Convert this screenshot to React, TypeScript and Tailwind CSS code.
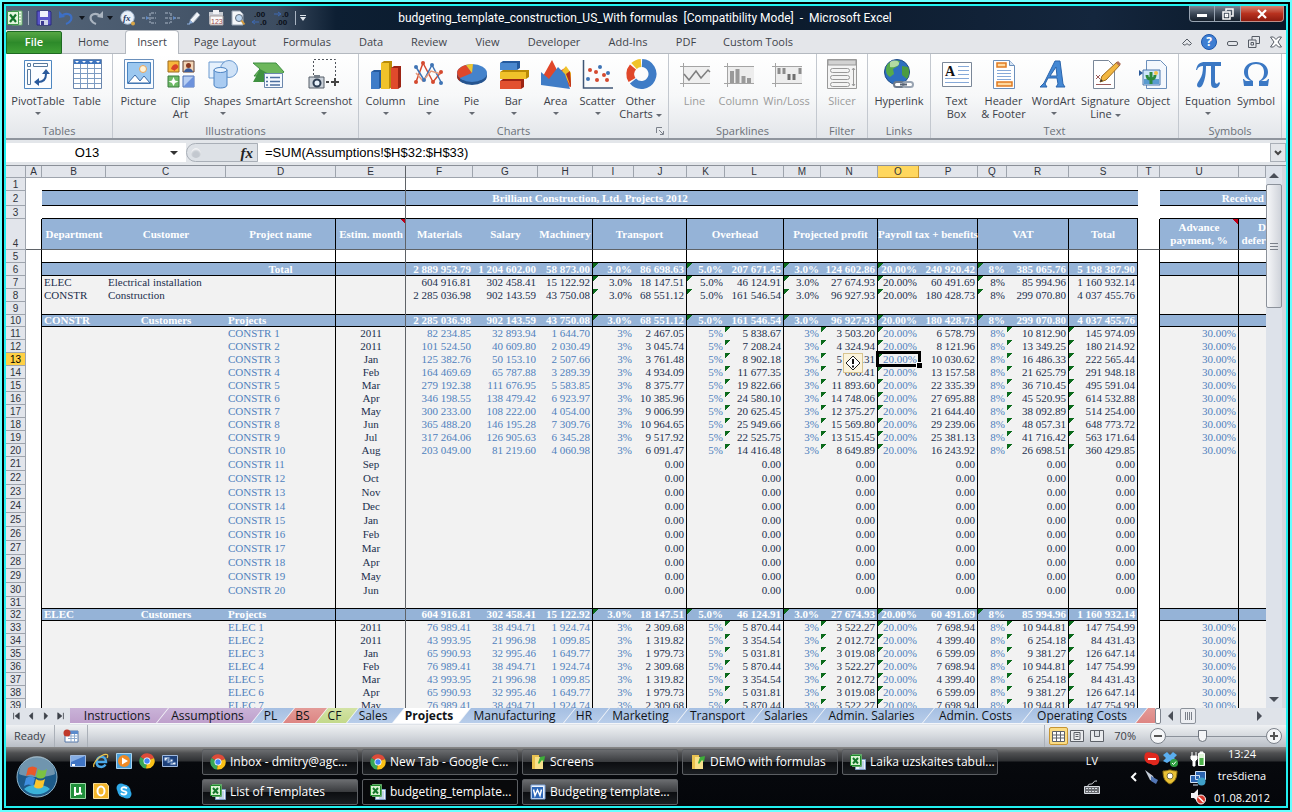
import clsx from "clsx";
import type { ReactNode } from "react";

/* ---------- Sheet data ---------- */

const COLUMNS = [
  { id: "A", width: "w-4" },
  { id: "B", width: "w-16" },
  { id: "C", width: "w-[120px]" },
  { id: "D", width: "w-[110px]" },
  { id: "E", width: "w-[70px]" },
  { id: "F", width: "w-[67px]" },
  { id: "G", width: "w-[65px]" },
  { id: "H", width: "w-[55px]" },
  { id: "I", width: "w-[41px]" },
  { id: "J", width: "w-[53px]" },
  { id: "K", width: "w-[38px]" },
  { id: "L", width: "w-[59px]" },
  { id: "M", width: "w-[37px]" },
  { id: "N", width: "w-[57px]" },
  { id: "O", width: "w-[41px]" },
  { id: "P", width: "w-[59px]" },
  { id: "Q", width: "w-[29px]" },
  { id: "R", width: "w-[62px]" },
  { id: "S", width: "w-[69px]" },
  { id: "T", width: "w-[22px]" },
  { id: "U", width: "w-[79px]" },
  { id: "V", width: "" },
];

const EDGES = "ADHJLNPRSTU";
const MONTHS = ["2011", "2011", "Jan", "Feb", "Mar", "Apr", "May", "Jun", "Jul", "Aug", "Sep", "Oct", "Nov", "Dec", "Jan", "Feb", "Mar", "Apr", "May", "Jun"];

// Order of amounts: F, G, H, J, L, N, P, R, S
const AMOUNT_COLUMNS = "FGHJLNPRS";

const TOTAL = "2 889 953.79|1 204 602.00|58 873.00|86 698.63|207 671.45|124 602.86|240 920.42|385 065.76|5 198 387.90";
const ELEC = "604 916.81|302 458.41|15 122.92|18 147.51|46 124.91|27 674.93|60 491.69|85 994.96|1 160 932.14";
const CONSTR = "2 285 036.98|902 143.59|43 750.08|68 551.12|161 546.54|96 927.93|180 428.73|299 070.80|4 037 455.76";

const CONSTR_PROJECTS = [
  "82 234.85|32 893.94|1 644.70|2 467.05|5 838.67|3 503.20|6 578.79|10 812.90|145 974.09",
  "101 524.50|40 609.80|2 030.49|3 045.74|7 208.24|4 324.94|8 121.96|13 349.25|180 214.92",
  "125 382.76|50 153.10|2 507.66|3 761.48|8 902.18|5 341.31|10 030.62|16 486.33|222 565.44",
  "164 469.69|65 787.88|3 289.39|4 934.09|11 677.35|7 006.41|13 157.58|21 625.79|291 948.18",
  "279 192.38|111 676.95|5 583.85|8 375.77|19 822.66|11 893.60|22 335.39|36 710.45|495 591.04",
  "346 198.55|138 479.42|6 923.97|10 385.96|24 580.10|14 748.06|27 695.88|45 520.95|614 532.88",
  "300 233.00|108 222.00|4 054.00|9 006.99|20 625.45|12 375.27|21 644.40|38 092.89|514 254.00",
  "365 488.20|146 195.28|7 309.76|10 964.65|25 949.66|15 569.80|29 239.06|48 057.31|648 773.72",
  "317 264.06|126 905.63|6 345.28|9 517.92|22 525.75|13 515.45|25 381.13|41 716.42|563 171.64",
  "203 049.00|81 219.60|4 060.98|6 091.47|14 416.48|8 649.89|16 243.92|26 698.51|360 429.85",
];

const ELEC_PROJECTS = [
  "76 989.41|38 494.71|1 924.74|2 309.68|5 870.44|3 522.27|7 698.94|10 944.81|147 754.99",
  "43 993.95|21 996.98|1 099.85|1 319.82|3 354.54|2 012.72|4 399.40|6 254.18|84 431.43",
  "65 990.93|32 995.46|1 649.77|1 979.73|5 031.81|3 019.08|6 599.09|9 381.27|126 647.14",
];

type Cells = Record<string, string>;
type Kind = "blue" | "summary" | "detail" | "white";

function amounts(line: string): Cells {
  const cells: Cells = {};
  line.split("|").forEach((value, i) => {
    cells[AMOUNT_COLUMNS[i]] = value;
  });
  return cells;
}

const RATES = { I: "3.0%", K: "5.0%", M: "3.0%", O: "20.00%", Q: "8%" };
const DETAIL_RATES = { I: "3%", K: "5%", M: "3%", O: "20.00%", Q: "8%", U: "30.00%" };
const ZEROS = { J: "0.00", L: "0.00", N: "0.00", P: "0.00", R: "0.00", S: "0.00" };

/* ---------- Sheet ---------- */

function RowHeader({ n, active, low }: { n: number; active?: boolean; low?: boolean }) {
  return (
    <th
      scope="row"
      className={clsx(
        "border-r border-b border-[#9ea4ad] p-0 text-center font-['Liberation_Sans',sans-serif] text-[10px] font-normal",
        active ? "bg-[#ffd044] text-black" : "bg-[#e2e5eb] text-[#30343c]",
        low && "align-bottom",
      )}
    >
      {n}
    </th>
  );
}

function align(id: string, kind: Kind, text?: string) {
  if (id === "E") return "text-center";
  if (kind === "blue" && (id === "C" || text === "Total")) return "text-center";
  return id < "E" ? "text-left" : "text-right";
}

type SheetRowProps = {
  n: number;
  kind: Kind;
  height?: string;
  cells?: Cells;
  line?: boolean;
};

function SheetRow({ n, kind, height = "h-[13px]", cells = {}, line }: SheetRowProps) {
  const selected = n === 13;
  const flags = kind === "detail" ? "LNORS" : "IKMOQ";

  return (
    <tr className={height}>
      <RowHeader n={n} active={selected} />
      {COLUMNS.map(({ id }) => {
        const text = cells[id];
        const gap = id === "A" || id === "T";
        const flagged = text && text !== "0.00" && kind !== "white" && flags.includes(id);
        const input = kind === "detail" && "DFGHIKMOQU".includes(id);
        return (
          <td
            key={id}
            className={clsx(
              "px-0.5",
              align(id, kind, text),
              EDGES.includes(id) && "border-r border-black",
              line && !gap && "border-b border-b-black",
              gap || kind === "white" ? "bg-white" : kind === "blue" ? "bg-[#95b3d7]" : "bg-[#f2f2f2]",
              flagged && "bg-[linear-gradient(135deg,#0b6b1c_4px,transparent_4px)]",
              kind === "blue" ? "font-bold text-white" : input ? "text-[#4f81bd]" : "text-[#1b2f4d]",
              selected && (id === "N" || id === "O") && "relative",
            )}
          >
            {text}
            {selected && id === "O" && (
              <span className="pointer-events-none absolute -inset-x-0.5 -top-0.5 -bottom-px border-3 border-black">
                <span className="absolute -right-1 -bottom-1 size-1.5 border-t border-l border-white bg-black" />
              </span>
            )}
            {selected && id === "N" && (
              <button
                type="button"
                aria-label="Error checking options"
                className="absolute top-0 left-[22px] z-10 flex size-5 items-center justify-center border border-[#d8c48e] bg-[#faf3dc]"
              >
                <svg viewBox="0 0 16 16" className="size-4">
                  <path d="M8 1 15 8 8 15 1 8Z" fill="#fff" stroke="#222" />
                  <path d="M8 4v5M8 10.5v2" stroke="#111" strokeWidth="2" />
                </svg>
              </button>
            )}
          </td>
        );
      })}
    </tr>
  );
}

function HeadCell({ children, span = 1, edge, note }: { children: ReactNode; span?: number; edge?: boolean; note?: boolean }) {
  return (
    <th
      scope="col"
      colSpan={span}
      className={clsx(
        "border-b border-b-[#5f6368] bg-[#95b3d7] p-0 text-center leading-[13px] font-bold text-white",
        edge && "border-r border-r-black",
        note && "bg-[linear-gradient(225deg,#c00018_4px,transparent_4px)]",
      )}
    >
      {children}
    </th>
  );
}

function Sheet() {
  return (
    <div className="relative min-w-0 flex-1 overflow-hidden bg-white">
      <table className="w-full table-fixed border-separate border-spacing-0 font-['Liberation_Serif',serif] text-[11px] leading-[11px] whitespace-nowrap">
        <colgroup>
          <col className="w-5" />
          {COLUMNS.map((c) => (
            <col key={c.id} className={c.width} />
          ))}
        </colgroup>
        <thead>
          <tr className="h-3 font-['Liberation_Sans',sans-serif] text-[10px] text-[#30343c]">
            <td className="border-r border-b border-[#9ea4ad] bg-[#e2e5eb] p-0" />
            {COLUMNS.map(({ id }) => (
              <th
                key={id}
                scope="col"
                className={clsx(
                  "border-r border-b p-0 font-normal",
                  id === "O" ? "border-[#c9962a] bg-[#ffd75e]" : "border-[#9ea4ad] bg-[#e2e5eb]",
                )}
              >
                {id === "V" ? "" : id}
              </th>
            ))}
          </tr>
        </thead>
        <tbody>
          <tr className="h-[13px]">
            <RowHeader n={1} />
            <td />
            <td colSpan={18} className="border-b border-black" />
            <td />
            <td colSpan={2} className="border-b border-black" />
          </tr>
          <tr className="h-[15px] font-bold text-white">
            <RowHeader n={2} />
            <td />
            <td colSpan={18} className="border-b border-black bg-[#95b3d7] p-0 text-center">
              Brilliant Construction, Ltd. Projects 2012
            </td>
            <td />
            <td colSpan={2} className="border-b border-black bg-[#95b3d7] px-0.5 py-0 text-right">
              Received
            </td>
          </tr>
          <tr className="h-[13px]">
            <RowHeader n={3} />
            <td />
            <td colSpan={18} className="border-b border-black" />
            <td />
            <td colSpan={2} className="border-b border-black" />
          </tr>
          <tr className="h-[31px]">
            <RowHeader n={4} low />
            <td className="border-r border-b border-black border-b-[#5f6368]" />
            <HeadCell>Department</HeadCell>
            <HeadCell>Customer</HeadCell>
            <HeadCell edge>Project name</HeadCell>
            <HeadCell note>Estim. month</HeadCell>
            <HeadCell>Materials</HeadCell>
            <HeadCell>Salary</HeadCell>
            <HeadCell edge>Machinery</HeadCell>
            <HeadCell span={2} edge>Transport</HeadCell>
            <HeadCell span={2} edge>Overhead</HeadCell>
            <HeadCell span={2} edge>Projected profit</HeadCell>
            <HeadCell span={2} edge>Payroll tax + benefits</HeadCell>
            <HeadCell span={2} edge>VAT</HeadCell>
            <HeadCell edge>Total</HeadCell>
            <td className="border-r border-b border-black border-b-[#5f6368]" />
            <HeadCell edge note>
              Advance
              <br />
              payment, %
            </HeadCell>
            <HeadCell>
              <span className="block text-right">
                D
                <br />
                defer
              </span>
            </HeadCell>
          </tr>
          <SheetRow n={5} kind="white" line />
          <SheetRow n={6} kind="blue" line cells={{ D: "Total", ...RATES, ...amounts(TOTAL) }} />
          <SheetRow n={7} kind="summary" cells={{ B: "ELEC", C: "Electrical installation", ...RATES, ...amounts(ELEC) }} />
          <SheetRow n={8} kind="summary" cells={{ B: "CONSTR", C: "Construction", ...RATES, ...amounts(CONSTR) }} />
          <SheetRow n={9} kind="summary" line />
          <SheetRow n={10} kind="blue" height="h-3" line cells={{ B: "CONSTR", C: "Customers", D: "Projects", ...RATES, ...amounts(CONSTR) }} />
          {MONTHS.map((month, i) => {
            const line = CONSTR_PROJECTS[i];
            const values = line ? { ...DETAIL_RATES, ...amounts(line) } : ZEROS;
            return (
              <SheetRow
                key={i}
                n={11 + i}
                kind="detail"
                height={line ? "h-[13px]" : "h-3.5"}
                cells={{ D: `CONSTR ${i + 1}`, E: month, ...values }}
              />
            );
          })}
          <SheetRow n={31} kind="detail" height="h-3" line />
          <SheetRow n={32} kind="blue" height="h-3" line cells={{ B: "ELEC", C: "Customers", D: "Projects", ...RATES, ...amounts(ELEC) }} />
          {MONTHS.slice(0, 7).map((month, i) => (
            <SheetRow
              key={i}
              n={33 + i}
              kind="detail"
              cells={{ D: `ELEC ${i + 1}`, E: month, ...DETAIL_RATES, ...amounts(ELEC_PROJECTS[i % 3]) }}
            />
          ))}
        </tbody>
      </table>
      {/* Frozen pane divider */}
      <div className="pointer-events-none absolute inset-y-0 left-[399px] w-px bg-[#5f6368]" />
    </div>
  );
}

function VerticalScroll() {
  return (
    <div className="flex w-5 shrink-0 flex-col border-r-4 border-[#d3d8df] bg-[#dde2ea]">
      <button type="button" aria-label="Scroll up" className="flex h-[18px] items-center justify-center">
        <span className="border-x-5 border-b-5 border-transparent border-b-[#4a4f58]" />
      </button>
      <div className="flex h-[124px] flex-col items-center justify-center gap-0.5 rounded-xs border border-[#8c929b] bg-linear-to-r from-[#f6f7f9] to-[#cfd3da]">
        <span className="h-px w-2 bg-[#7a808a]" />
        <span className="h-px w-2 bg-[#7a808a]" />
        <span className="h-px w-2 bg-[#7a808a]" />
      </div>
      <button type="button" aria-label="Scroll down" className="mt-auto flex h-[18px] items-center justify-center">
        <span className="border-x-5 border-t-5 border-transparent border-t-[#4a4f58]" />
      </button>
    </div>
  );
}

/* ---------- Title bar ---------- */

function ExcelLogo({ className }: { className?: string }) {
  return (
    <svg viewBox="0 0 16 16" className={className}>
      <path d="M5 1h10v14H5z" fill="#f4fff0" stroke="#5fa866" />
      <path d="M10 4h4M10 7h4M10 10h4M10 13h4" stroke="#7dbb7c" />
      <path d="M.5 1.5h11v13H.5z" fill="#e4f6de" stroke="#3f9a4a" />
      <path d="m3 4.5 6 7.5M9 4.5 3 12" stroke="#13752a" strokeWidth="2.2" />
    </svg>
  );
}

function ExcelDoc() {
  return (
    <svg viewBox="0 0 16 16" className="size-4 shrink-0">
      <path d="M5.5 5.5h10v10h-10z" fill="#eef4fb" stroke="#7f9cc4" />
      <path d="M9 8h5M9 10h5M9 12h5M9 14h5" stroke="#8fb0d8" />
      <path d="M2.5.5h9v12h-9z" fill="#fff" stroke="#5fa866" />
      <path d="M.5 1.5h10v10H.5z" fill="#d9f2d2" stroke="#1f8a2c" />
      <path d="m3 4 5 5.5M8 4 3 9.5" stroke="#13752a" strokeWidth="2" />
    </svg>
  );
}

function QuickAccess() {
  const item = "flex h-5 w-[22px] items-center justify-center";
  return (
    <div className="flex flex-1 items-center">
      <ExcelLogo className="mx-px size-4" />
      <span className="mx-1 h-3.5 w-px bg-[#a9b4c2]" />
      <button type="button" aria-label="Save" className={item}>
        <svg viewBox="0 0 16 16" className="size-4">
          <path d="M1 1h13l1 1v13H1z" fill="#5a55c8" stroke="#2b2a80" />
          <path d="M4 1h8v6H4z" fill="#eef1fb" />
          <path d="M4 10h8v5H4z" fill="#cfd5ea" />
          <path d="M5 11h3v4H5z" fill="#3b3a90" />
        </svg>
      </button>
      <button type="button" aria-label="Undo" className={item}>
        <svg viewBox="0 0 16 16" className="size-4" fill="none" stroke="#3d6fc4" strokeWidth="2.2">
          <path d="M4 6c4-4 11-2 9 4-1 2-2 3-5 4" />
          <path d="M1 8V1l6 6z" fill="#3d6fc4" stroke="none" />
        </svg>
      </button>
      <span className="ml-0.5 border-x-3 border-t-4 border-transparent border-t-[#10151d]" />
      <button type="button" aria-label="Redo" className={item}>
        <svg viewBox="0 0 16 16" className="size-4" fill="none" stroke="#aab4c0" strokeWidth="2.2">
          <path d="M12 6C8 2 1 4 3 10c1 2 2 3 5 4" />
          <path d="M15 8V1L9 7z" fill="#aab4c0" stroke="none" />
        </svg>
      </button>
      <span className="border-x-3 border-t-4 border-transparent border-t-[#10151d]" />
      <button type="button" aria-label="Insert function" className={clsx(item, "ml-1")}>
        <svg viewBox="0 0 16 16" className="size-4">
          <circle cx="7.5" cy="7.5" r="6.7" fill="#e9f0f8" stroke="#a8bdd6" />
          <text x="3" y="11" fontSize="9" fontStyle="italic" fontWeight="700" fontFamily="Liberation Serif, serif" fill="#1e3864">fx</text>
          <circle cx="13" cy="13.5" r="2" fill="#d9a648" />
        </svg>
      </button>
      <button type="button" aria-label="Trace precedents" className={item}>
        <svg viewBox="0 0 16 16" className="size-4" stroke="#a9b6c6" fill="none">
          <path d="M0 8h7M9 3h5M9 8h5M9 13h5M8 3v10" strokeDasharray="3 1" />
          <path d="M4 6v4l3-2z" fill="#5f89c4" stroke="none" />
        </svg>
      </button>
      <button type="button" aria-label="Trace dependents" className={item}>
        <svg viewBox="0 0 16 16" className="size-4" stroke="#a9b6c6" fill="none">
          <path d="M9 8h7M1 3h5M1 8h5M1 13h5M7 3v10" strokeDasharray="3 1" />
          <path d="M9 6v4l3-2z" fill="#5f89c4" stroke="none" />
        </svg>
      </button>
      <button type="button" aria-label="Remove arrows" className={item}>
        <svg viewBox="0 0 16 16" className="size-4">
          <path d="m4 10 7-8 3 3-7 8z" fill="#f1f4f8" stroke="#97a3b2" />
          <path d="m4 10 3 3-4 1z" fill="#8fb0de" />
          <path d="M1 14h3" stroke="#8fb0de" />
        </svg>
      </button>
      <button type="button" aria-label="Paste values" className={item}>
        <svg viewBox="0 0 16 16" className="size-4">
          <path d="M1 2h14v12H1z" fill="#c8ccd3" />
          <path d="M5 0h6v4H5z" fill="#f2f3f5" />
          <path d="M2 6h13v9H2z" fill="#fafafa" stroke="#a59c9c" />
          <text x="3" y="14" fontSize="7" fontFamily="Liberation Sans, sans-serif" fill="#9c4b4b">123</text>
        </svg>
      </button>
      <button type="button" aria-label="Print preview" className={item}>
        <svg viewBox="0 0 16 16" className="size-4">
          <path d="M2 1h8l3 3v11H2z" fill="#f5f7fa" stroke="#9aa6b5" />
          <circle cx="9" cy="8" r="3.5" fill="#bcd6f0" stroke="#5e6b7c" />
          <path d="m11.5 10.5 3 4" stroke="#d39a3c" strokeWidth="2" />
        </svg>
      </button>
      {["Increase decimal", "Decrease decimal"].map((label, i) => (
        <button key={label} type="button" aria-label={label} className={item}>
          <svg viewBox="0 0 16 16" className="size-4" fontFamily="Liberation Sans, sans-serif" fontSize="8" fontWeight="700" fill="#0a0f18">
            <text x={i ? 8 : 2} y="7">{i ? ".0" : ".00"}</text>
            <text x={i ? 2 : 8} y="15">{i ? ".00" : ".0"}</text>
            <path d={i ? "M0 4h6M4 2l3 2-3 2" : "M7 12H1m2-2-3 2 3 2"} stroke="#3e6ab4" fill="none" />
          </svg>
        </button>
      ))}
      <span className="mr-1 ml-0.5 h-3.5 w-px bg-[#a9b4c2]" />
      <button type="button" aria-label="Customize quick access" className="flex flex-col items-center gap-px">
        <span className="h-px w-1.5 bg-[#dfe5ec]" />
        <span className="border-x-3 border-t-4 border-transparent border-t-[#dfe5ec]" />
      </button>
    </div>
  );
}

function TitleBar() {
  return (
    <header className="flex h-6 shrink-0 bg-[linear-gradient(90deg,#55667a_0,#3d4d61_270px,#0d1f33_330px,#081626_50%,#14263d_85%,#0a1828_100%)]">
      <QuickAccess />
      <h1 className="self-center font-[Roboto,sans-serif] text-xs whitespace-pre text-white">
        budgeting_template_construction_US_With formulas  [Compatibility Mode]  -  Microsoft Excel
      </h1>
      <div className="flex flex-1 items-start justify-end pr-0.5">
        <button type="button" aria-label="Minimize" className="flex h-4 w-[26px] items-end justify-center rounded-bl-sm border border-t-0 border-[#98a4b2] bg-linear-to-b from-[#7d8895] via-[#3e4a59] to-[#16202c] pb-1">
          <span className="h-[3px] w-2.5 bg-white" />
        </button>
        <button type="button" aria-label="Restore" className="flex h-4 w-[26px] items-center justify-center border border-t-0 border-l-0 border-[#98a4b2] bg-linear-to-b from-[#7d8895] via-[#3e4a59] to-[#16202c]">
          <svg viewBox="0 0 12 12" className="size-3" fill="none" stroke="#fff" strokeWidth="1.5">
            <path d="M4 3V1h7v7H9M1 4h7v7H1zM3.5 6.5h2v2h-2z" />
          </svg>
        </button>
        <button type="button" aria-label="Close" className="flex h-4 w-[43px] items-center justify-center rounded-br-sm border border-t-0 border-l-0 border-[#c08e88] bg-linear-to-b from-[#d8826f] via-[#b8321f] to-[#8d1a0e]">
          <svg viewBox="0 0 10 10" className="size-2.5" stroke="#fff" strokeWidth="2.2">
            <path d="m1 1 8 8M9 1 1 9" />
          </svg>
        </button>
      </div>
    </header>
  );
}

/* ---------- Ribbon ---------- */

const TABS = [
  { label: "Home", width: "w-[63px]" },
  { label: "Insert", width: "w-[54px]" },
  { label: "Page Layout", width: "w-[92px]" },
  { label: "Formulas", width: "w-[72px]" },
  { label: "Data", width: "w-14" },
  { label: "Review", width: "w-[60px]" },
  { label: "View", width: "w-[57px]" },
  { label: "Developer", width: "w-[76px]" },
  { label: "Add-Ins", width: "w-[72px]" },
  { label: "PDF", width: "w-11" },
  { label: "Custom Tools", width: "w-[100px]" },
];

function RibbonTabs() {
  return (
    <nav className="flex h-6 shrink-0 items-stretch bg-[#e4e6ea] text-[11px] text-[#3f444b]">
      <button type="button" className="mt-px w-14 rounded-t-xs border border-[#1e6a22] bg-linear-to-b from-[#57a744] via-[#2d8a2a] to-[#3fa035] font-semibold text-white">
        File
      </button>
      {TABS.map(({ label, width }) => (
        <button
          key={label}
          type="button"
          className={clsx(
            width,
            label === "Insert" ? "rounded-t-sm border border-b-0 border-[#b4b9c0] bg-white" : "border-b border-[#b4b9c0] pt-px",
          )}
        >
          {label}
        </button>
      ))}
      <div className="flex flex-1 items-center justify-end gap-2 border-b border-[#b4b9c0] pr-1">
        <button type="button" aria-label="Collapse ribbon">
          <svg viewBox="0 0 12 12" className="size-3" fill="none" stroke="#555b64">
            <path d="M1.5 7.5 6 3l4.5 4.5L9 9H7.5L6 7.5 4.5 9H3z" />
          </svg>
        </button>
        <button type="button" aria-label="Help" className="flex size-4 items-center justify-center rounded-full border border-[#1c56ab] bg-[#3e7ed2] text-xs font-bold text-white">
          ?
        </button>
        <button type="button" aria-label="Minimize workbook" className="mt-1 ml-0.5 h-[5px] w-[11px] rounded-xs border border-[#555b64]" />
        <button type="button" aria-label="Restore workbook" className="ml-0.5">
          <svg viewBox="0 0 12 12" className="size-3" fill="none" stroke="#555b64">
            <path d="M4 4V.5h7.5v7H8M.5 4H8v7.5H.5zM3 6.5h2.5V9H3z" />
          </svg>
        </button>
        <button type="button" aria-label="Close workbook" className="ml-0.5">
          <svg viewBox="0 0 12 12" className="size-3" fill="#fff" stroke="#555b64">
            <path d="M.5 1h3L6 3.5 8.5 1h3L8 6l3.5 5h-3L6 8.5 3.5 11h-3L4 6z" />
          </svg>
        </button>
      </div>
    </nav>
  );
}

const svg = "size-8";

const ICONS: Record<string, ReactNode> = {
  pivot: (
    <svg viewBox="0 0 32 32" className={svg} fill="none">
      <path d="M2.5 2.5h27v28h-27z" fill="#fbfdff" stroke="#4e86c0" />
      <path d="M5.5 5.5h3v3h-3zM11.5 5.5h14v3h-14zM5.5 11.5h3v15h-3z" stroke="#56789c" />
      <path d="M16 24c6 0 8-3 8-8" stroke="#2a5a9c" strokeWidth="2" />
      <path d="m12 24 5-4v8zM24 11l4 5h-8z" fill="#2a5a9c" />
    </svg>
  ),
  table: (
    <svg viewBox="0 0 32 32" className={svg} fill="none">
      <path d="M2.5 1.5h28v29h-28z" fill="#fff" stroke="#6a86ad" />
      <path d="M3 2h27v4H3z" fill="#3e74bd" />
      <path d="M3 10.5h27M3 15.5h27M3 20.5h27M3 25.5h27M9.5 6v24M16.5 6v24M23.5 6v24" stroke="#7d9cc2" />
      <path d="m4 3 2 2 2-2zm7 0 2 2 2-2zm7 0 2 2 2-2zm7 0 2 2 2-2z" fill="#fff" />
    </svg>
  ),
  picture: (
    <svg viewBox="0 0 32 32" className={svg}>
      <path d="M1.5 1.5h29v29h-29z" fill="#f8fbff" stroke="#6a8fbb" />
      <path d="M4.5 4.5h23v21h-23z" fill="#9cc8f0" stroke="#4a84c0" />
      <circle cx="20" cy="11" r="3.5" fill="#fff3d8" stroke="#e8a55a" />
      <path d="m5 25 7-8 5 6 4-5 6 7z" fill="#fff" stroke="#3d6ca8" />
    </svg>
  ),
  clip: (
    <svg viewBox="0 0 32 32" className={svg}>
      <path d="M3 3h11v11H3z" fill="#f6b73c" stroke="#9b6a1c" />
      <path d="M6 11c1-5 6-6 7-3s-3 3-3 5z" fill="#d8432a" />
      <path d="M18 3h11v11H18z" fill="#f3d6b8" stroke="#5c3a2c" />
      <circle cx="23.5" cy="7.5" r="2.5" fill="#8a3a22" />
      <path d="M19 14c1-5 8-5 9 0z" fill="#3a5c9c" />
      <path d="M3 18h11v11H3z" fill="#6db966" stroke="#3c7d40" />
      <path d="m8.5 19 1.5 3.5 3.5 1L10 25l-1.5 3L7 25l-3.5-1.5 3.5-1z" fill="#fff" />
      <path d="M18 18h11v11H18z" fill="#b6cdf2" stroke="#4b6fb4" />
      <path d="m18 29 11-11v11z" fill="#6d92dc" />
    </svg>
  ),
  shapes: (
    <svg viewBox="0 0 32 32" className={svg}>
      <path d="M2 4h16v16H2z" fill="#e6f1fd" stroke="#6b9ad0" />
      <circle cx="22" cy="11" r="8.5" fill="#cfe2f7" stroke="#6b9ad0" />
      <path d="M7 12v15c0 4 13 4 13 0V12z" fill="#a9cbf1" stroke="#4d83c2" />
      <ellipse cx="13.5" cy="12" rx="6.5" ry="2.5" fill="#e8f3ff" stroke="#4d83c2" />
    </svg>
  ),
  smartart: (
    <svg viewBox="0 0 32 32" className={svg}>
      <path d="M0 5h23l8 9-6 4H1l6-7z" fill="#6db75c" stroke="#3f8f43" />
      <path d="M7 11 0 24h12l4-8z" fill="#3f9140" />
      <path d="M11.5 15.5h18v14h-18z" fill="#f5f9ff" stroke="#6b87ac" />
      <path d="M17 19.5h10M17 23.5h10M17 27h10M13 19.5h2M13 23.5h2M13 27h2" stroke="#4c6f9f" strokeWidth="1.5" />
    </svg>
  ),
  screenshot: (
    <svg viewBox="0 0 32 32" className={svg} fill="none">
      <path d="M5.5 17V1.5h22V21" stroke="#50555c" strokeDasharray="2 2" />
      <path d="M1 19h15v11H1z" fill="#c9d0d8" stroke="#565e68" />
      <path d="M6 17h6v3H6z" fill="#747d88" />
      <circle cx="9" cy="25" r="3.5" fill="#e8f1fa" stroke="#2d3d52" strokeWidth="2" />
      <path d="M18 24h3M23 24h8M27 20v8" stroke="#444" strokeWidth="2" />
    </svg>
  ),
  column: (
    <svg viewBox="0 0 32 32" className={svg}>
      <path d="m1 14 3-2h8v17l-3 2H1z" fill="#245a9e" />
      <path d="M1 14h8v17H1z" fill="#3e7cc8" />
      <path d="m11 5 3-2h8v26l-3 2h-8z" fill="#b98b06" />
      <path d="M11 5h8v26h-8z" fill="#f0c22a" />
      <path d="m21 10 3-2h7v21l-3 2h-7z" fill="#9c2414" />
      <path d="M21 10h7v21h-7z" fill="#e04a2c" />
    </svg>
  ),
  line: (
    <svg viewBox="0 0 32 32" className={svg} fill="none" strokeWidth="1.5">
      <path d="m3 24 7-19 10 19 8-10" stroke="#d4492f" />
      <path d="m3 9 8 13 8-15 9 17" stroke="#3f74b5" />
      <path d="m3 15 7 8 8-10 10 3" stroke="#e79a7c" />
      <g fill="#d4492f"><circle cx="3" cy="24" r="2" /><circle cx="10" cy="5" r="2" /><circle cx="20" cy="24" r="2" /><circle cx="28" cy="14" r="2" /></g>
      <g fill="#3f74b5"><circle cx="3" cy="9" r="2" /><circle cx="11" cy="22" r="2" /><circle cx="19" cy="7" r="2" /><circle cx="28" cy="25" r="2" /></g>
    </svg>
  ),
  pie: (
    <svg viewBox="0 0 32 32" className={svg}>
      <ellipse cx="16" cy="18" rx="15" ry="9" fill="#25548f" />
      <ellipse cx="16" cy="15" rx="15" ry="9" fill="#4583cb" />
      <path d="M16 15 4 20c-6-5-2-11 6-13z" fill="#e0472a" />
      <path d="m16 15-6-8c3-1 5-1 7-1z" fill="#efc62f" />
      <path d="M1 15v3c0 2 1 4 3 5v-3c-2-1-3-3-3-5z" fill="#a82b18" />
    </svg>
  ),
  bar: (
    <svg viewBox="0 0 32 32" className={svg}>
      <path d="M2 5h17v7H2z" fill="#4a88cf" />
      <path d="m2 5 3-2h17l-3 2zM19 5l3-2v7l-3 2z" fill="#245a9e" />
      <path d="M2 14h26v7H2z" fill="#f0c22a" />
      <path d="m2 14 3-2h26l-3 2zM28 14l3-2v7l-3 2z" fill="#b98b06" />
      <path d="M2 23h21v8H2z" fill="#e2502f" />
      <path d="m2 23 3-2h21l-3 2zM23 23l3-2v8l-3 2z" fill="#9c2414" />
    </svg>
  ),
  area: (
    <svg viewBox="0 0 32 32" className={svg}>
      <path d="m2 20 10-18 6 12 7-4 6 6v13L12 24z" fill="#e0472a" />
      <path d="m22 13 4-5 5 7-1 12z" fill="#f0c22a" />
      <path d="m26 16 4-3 1 16z" fill="#b33018" />
      <path d="m1 14 8 7 9-12 7 7 5 15-29-4z" fill="#3f7cc6" />
    </svg>
  ),
  scatter: (
    <svg viewBox="0 0 32 32" className={svg}>
      <path d="M1.5 2v28H31" fill="none" stroke="#3f5675" strokeWidth="1.5" />
      <g fill="#3f74b5"><circle cx="18" cy="9" r="2" /><circle cx="26" cy="15" r="2" /><circle cx="6" cy="21" r="2" /></g>
      <g fill="#d4492f"><circle cx="8" cy="12" r="2" /><circle cx="14" cy="14" r="2" /><circle cx="22" cy="17" r="2" /><circle cx="15" cy="22" r="2" /><circle cx="25" cy="22" r="2" /></g>
    </svg>
  ),
  donut: (
    <svg viewBox="0 0 32 32" className={svg} fill="none" strokeWidth="8">
      <path d="M17 5a11 11 0 1 1-9 18" stroke="#3f7cc6" />
      <path d="M7 22A11 11 0 0 1 8 9" stroke="#e0472a" />
      <path d="M9 8a11 11 0 0 1 7-3" stroke="#f0c22a" />
    </svg>
  ),
  sparkLine: (
    <svg viewBox="0 0 32 32" className={svg} fill="none" stroke="#a4a4a4">
      <path d="M5 9h26v16H5z" fill="#efefef" stroke="none" />
      <path d="M1 8.5h30M1 25.5h30M4.5 5v24" />
      <path d="m5 16 5 6 7-9 5 7 7-8 2 2" stroke="#7e7e7e" strokeWidth="1.5" />
    </svg>
  ),
  sparkColumn: (
    <svg viewBox="0 0 32 32" className={svg} fill="none" stroke="#a4a4a4">
      <path d="M5 9h26v16H5z" fill="#ededed" stroke="none" />
      <path d="M1 8.5h30M1 25.5h30M4.5 5v24" />
      <path d="M9 25V13M14.5 25V11M20.5 25v-7M26 25v-5" stroke="#9a9a9a" strokeWidth="4" />
    </svg>
  ),
  winLoss: (
    <svg viewBox="0 0 32 32" className={svg} fill="none" stroke="#a4a4a4">
      <path d="M5 9h26v16H5z" fill="#ededed" stroke="none" />
      <path d="M1 8.5h30M1 25.5h30M4.5 5v24" />
      <path d="M8 10v6M13 10v6M29 10v6" stroke="#8c8c8c" strokeWidth="3" />
      <path d="M18 16v6M23 16v6" stroke="#6f6f6f" strokeWidth="3" />
    </svg>
  ),
  slicer: (
    <svg viewBox="0 0 32 32" className={svg} fill="#f4f4f4" stroke="#999">
      <path d="M1.5 1.5h29v29h-29z" />
      <path d="M2 2h28v5H2z" fill="#d2d2d2" />
      <rect x="4.5" y="10.5" width="19" height="4" rx="2" />
      <rect x="4.5" y="17.5" width="19" height="4" rx="2" />
      <rect x="4.5" y="24.5" width="19" height="4" rx="2" />
      <path d="M27.5 10v18M26 12l1.5-2 1.5 2M26 26l1.5 2 1.5-2" fill="none" />
    </svg>
  ),
  link: (
    <svg viewBox="0 0 32 32" className={svg}>
      <circle cx="14" cy="14" r="12.5" fill="#2d6fc0" stroke="#1d4a85" />
      <path d="M4 7c4-5 10-5 13-4l-2 5-5 3 1 5-4 3C3 17 2 12 4 7z" fill="#57ab4a" />
      <path d="m19 8 6 1c2 5 1 9-1 12l-5-4z" fill="#4b9b42" />
      <path d="M7 4c3-2 8-2 9 1s-6 5-9 4z" fill="#d8f0c8" opacity=".7" />
      <rect x="11" y="24" width="10" height="5" rx="2.5" fill="#fff" stroke="#6e7a8a" strokeWidth="2" />
      <rect x="20" y="24" width="10" height="5" rx="2.5" fill="#fff" stroke="#98a3b1" strokeWidth="2" />
      <path d="M17 26.5h7" stroke="#566273" strokeWidth="2" />
    </svg>
  ),
  textBox: (
    <svg viewBox="0 0 32 32" className={svg}>
      <path d="M1.5 4.5h29v24h-29z" fill="#fff" stroke="#7a8798" />
      <path d="M17 8.5h11M17 12.5h11M17 16.5h11M4 20.5h24M4 24.5h24" stroke="#86a9d8" />
      <text x="4" y="18" fontSize="14" fontWeight="700" fontFamily="Liberation Serif, serif" fill="#111">A</text>
    </svg>
  ),
  header: (
    <svg viewBox="0 0 32 32" className={svg}>
      <path d="M5.5 2.5h16l5 5v23h-21z" fill="#fff" stroke="#6b8fbb" />
      <path d="M21.5 2.5v5h5" fill="#d5e4f5" stroke="#6b8fbb" />
      <path d="M9 5h9v4H9zM9 24h15v4H9z" fill="#ffd9a0" stroke="#e07b22" strokeWidth="1.5" />
      <path d="M9 12.5h14M9 15.5h14M9 18.5h14M9 21.5h14" stroke="#86a9d8" />
    </svg>
  ),
  wordart: (
    <svg viewBox="0 0 32 32" className={svg}>
      <path d="M17 3h5l3 23 2 3h-9l2-3-1-6h-9l-3 6 2 3H2l4-4zm1 6-6 9h7z" fill="#4488d4" stroke="#2a64ac" />
    </svg>
  ),
  signature: (
    <svg viewBox="0 0 32 32" className={svg}>
      <path d="M3.5 2.5h15l6 6v22h-21z" fill="#fff" stroke="#7a8798" />
      <path d="m6 17 4 4m0-4-4 4M6 26.5h15" stroke="#9a5a5a" />
      <path d="m10 24 2-6L27 4l3 3-14 15z" fill="#f2b741" stroke="#a06c1c" />
      <path d="m26 5 2-2 3 3-2 2z" fill="#b0705a" />
      <path d="m10 24 1-3 2 2z" fill="#333" />
    </svg>
  ),
  object: (
    <svg viewBox="0 0 32 32" className={svg}>
      <path d="M8.5 2.5h14l6 6v22h-20z" fill="#f4f8fd" stroke="#6b8fbb" />
      <path d="M5 12h17v15H5z" fill="#cfe6fa" stroke="#4a77ad" />
      <path d="M6 21h15v5H6z" fill="#5a9bd0" />
      <path d="M13 26V14M9 17c0 3 1 4 4 4s4-1 4-4" stroke="#2c8a3c" strokeWidth="3" fill="none" />
      <circle cx="18" cy="15" r="2" fill="#f3c24a" />
      <path d="m1 12 4 3-4 3z" fill="#2b5a9b" />
    </svg>
  ),
  pi: (
    <svg viewBox="0 0 32 32" className={svg} fill="#3b78c4">
      <path d="M4 12c1-6 4-8 9-8h16v4h-6v15c0 3 2 4 4 1l1 1c-1 4-3 5-5 5-4 0-4-3-4-7V8h-5c0 8-1 13-3 18-2 5-6 4-6 1 0-2 2-4 3-6 2-3 3-7 3-13-3 0-5 1-6 4z" />
    </svg>
  ),
  omega: (
    <svg viewBox="0 0 32 32" className={svg} fill="#3b78c4">
      <path d="M3 21h1c1 2 2 2 4 2h3C6 21 4 18 4 14 4 8 9 4 16 4s12 4 12 10c0 4-2 7-7 9h3c2 0 3 0 4-2h1l-1 7h-9v-5c4-2 5-5 5-9 0-5-3-8-8-8s-8 3-8 8c0 4 1 7 5 9v5H4z" />
    </svg>
  ),
};

type Tool = { label: ReactNode; icon: string; width: string; arrow?: boolean };
type Group = { name: string; width: string; tools: Tool[]; disabled?: boolean; launcher?: boolean };

const DownArrow = () => (
  <span className="inline-block border-x-3 border-t-3 border-transparent border-t-[#666b73] align-middle" />
);

const GROUPS: Group[] = [
  {
    name: "Tables",
    width: "w-[107px]",
    tools: [
      { label: "PivotTable", icon: "pivot", width: "w-[62px]", arrow: true },
      { label: "Table", icon: "table", width: "mr-1.5 w-9" },
    ],
  },
  {
    name: "Illustrations",
    width: "w-[246px]",
    tools: [
      { label: "Picture", icon: "picture", width: "w-[42px]" },
      { label: <>Clip<br />Art</>, icon: "clip", width: "w-[42px]" },
      { label: "Shapes", icon: "shapes", width: "w-[42px]", arrow: true },
      { label: "SmartArt", icon: "smartart", width: "w-[50px]" },
      { label: "Screenshot", icon: "screenshot", width: "w-[60px]", arrow: true },
    ],
  },
  {
    name: "Charts",
    width: "w-[310px]",
    launcher: true,
    tools: [
      { label: "Column", icon: "column", width: "w-[42px]", arrow: true },
      { label: "Line", icon: "line", width: "w-11", arrow: true },
      { label: "Pie", icon: "pie", width: "w-[42px]", arrow: true },
      { label: "Bar", icon: "bar", width: "w-[42px]", arrow: true },
      { label: "Area", icon: "area", width: "w-[42px]", arrow: true },
      { label: "Scatter", icon: "scatter", width: "w-[42px]", arrow: true },
      { label: <>Other<br />Charts <DownArrow /></>, icon: "donut", width: "w-11" },
    ],
  },
  {
    name: "Sparklines",
    width: "w-[148px]",
    disabled: true,
    tools: [
      { label: "Line", icon: "sparkLine", width: "w-11" },
      { label: "Column", icon: "sparkColumn", width: "w-11" },
      { label: "Win/Loss", icon: "winLoss", width: "w-[52px]" },
    ],
  },
  { name: "Filter", width: "w-[51px]", disabled: true, tools: [{ label: "Slicer", icon: "slicer", width: "w-[42px]" }] },
  { name: "Links", width: "w-[63px]", tools: [{ label: "Hyperlink", icon: "link", width: "w-14" }] },
  {
    name: "Text",
    width: "w-[248px]",
    tools: [
      { label: <>Text<br />Box</>, icon: "textBox", width: "w-[42px]" },
      { label: <>Header<br />&amp; Footer</>, icon: "header", width: "w-[52px]" },
      { label: "WordArt", icon: "wordart", width: "w-12", arrow: true },
      { label: <>Signature<br />Line <DownArrow /></>, icon: "signature", width: "w-14" },
      { label: "Object", icon: "object", width: "w-10" },
    ],
  },
  {
    name: "Symbols",
    width: "w-[103px]",
    tools: [
      { label: "Equation", icon: "pi", width: "w-[52px]", arrow: true },
      { label: "Symbol", icon: "omega", width: "w-11" },
    ],
  },
];

function Ribbon() {
  return (
    <section className="flex h-[86px] shrink-0 border-b-2 border-[#8f959d] bg-linear-to-b from-white via-[#f7f8f9] to-[#e3e6ea] text-[11px] leading-[13px] text-[#3c4148]">
      {GROUPS.map((group) => (
        <div key={group.name} className={clsx("flex flex-col border-r border-[#c3c8cf]", group.width)}>
          <div className="flex flex-1 justify-center pt-1">
            {group.tools.map((tool) => (
              <button
                key={tool.icon}
                type="button"
                disabled={group.disabled}
                className={clsx("flex flex-col items-center whitespace-nowrap", tool.width, group.disabled && "text-[#9b9b9b]")}
              >
                {ICONS[tool.icon]}
                <span className="mt-1 block text-center">{tool.label}</span>
                {tool.arrow && <span className="flex h-3 items-center"><DownArrow /></span>}
              </button>
            ))}
          </div>
          <div className="flex h-[15px] items-center text-[#6b7078]">
            <span className={clsx("flex-1 text-center", group.launcher && "pl-4")}>{group.name}</span>
            {group.launcher && (
              <button type="button" aria-label="Chart dialog" className="flex w-4 justify-center">
                <svg viewBox="0 0 8 8" className="size-2" fill="none" stroke="#7b818a">
                  <path d="M.5 6V.5H6M3 3l4 4M7.5 4v3.5H4" />
                </svg>
              </button>
            )}
          </div>
        </div>
      ))}
    </section>
  );
}

function FormulaBar() {
  return (
    <div className="flex h-[26px] shrink-0 border-b border-[#8b9098] bg-[#e3e6ea] py-[3px] font-['Liberation_Sans',sans-serif] text-[13px] text-black">
      <div className="flex w-[180px] items-center bg-white">
        <input aria-label="Name box" defaultValue="O13" className="w-[162px] text-center outline-none" />
        <span className="ml-0.5 border-x-4 border-t-4 border-transparent border-t-[#333]" />
      </div>
      <div className="flex w-[72px] items-center justify-between rounded-l-full border border-[#a9afb7] bg-[#dde1e6] pr-1 pl-1">
        <span className="size-2.5 rounded-full bg-[#c3c8cf] shadow-[inset_0_2px_2px_#f5f6f8]" />
        <button type="button" aria-label="Insert function" className="font-['Liberation_Serif',serif] text-[15px] leading-4 font-bold text-[#222] italic">
          fx
        </button>
      </div>
      <input aria-label="Formula" defaultValue="=SUM(Assumptions!$H$32:$H$33)" className="min-w-0 flex-1 bg-white pl-[7px] outline-none" />
      <button type="button" aria-label="Expand formula bar" className="flex w-4 items-center justify-center border border-[#a9afb7] bg-[#e3e6ea]">
        <svg viewBox="0 0 8 6" className="h-1.5 w-2" fill="none" stroke="#444" strokeWidth="2">
          <path d="m1 1 3 3 3-3" />
        </svg>
      </button>
    </div>
  );
}

/* ---------- Sheet tabs and status bar ---------- */

const PURPLE = "bg-linear-to-b from-[#c9b3d8] to-[#bfa0cc]";
const BLUE = "bg-linear-to-b from-[#a5bfe2] to-[#b8cdea]";
const RED = "bg-linear-to-b from-[#e39b98] to-[#dd8583]";
const GREEN = "bg-linear-to-b from-[#d3e3a5] to-[#c3d98a]";

const SHEETS = [
  { name: "Instructions", width: "w-[98px]", color: PURPLE },
  { name: "Assumptions", width: "w-[107px]", color: PURPLE },
  { name: "PL", width: "w-[43px]", color: BLUE },
  { name: "BS", width: "w-[45px]", color: RED },
  { name: "CF", width: "w-[43px]", color: GREEN },
  { name: "Sales", width: "w-[58px]", color: BLUE },
  { name: "Projects", width: "w-[78px]", color: "bg-white font-bold" },
  { name: "Manufacturing", width: "w-[117px]", color: BLUE },
  { name: "HR", width: "w-[46px]", color: BLUE },
  { name: "Marketing", width: "w-[91px]", color: BLUE },
  { name: "Transport", width: "w-[87px]", color: BLUE },
  { name: "Salaries", width: "w-[74px]", color: BLUE },
  { name: "Admin. Salaries", width: "w-[121px]", color: BLUE },
  { name: "Admin. Costs", width: "w-[111px]", color: BLUE },
  { name: "Operating Costs", width: "w-[126px]", color: BLUE },
];

const NAV = [
  { label: "First sheet", d: "M2 1v8M9 1v8L4 5z" },
  { label: "Previous sheet", d: "M7 1v8L3 5z" },
  { label: "Next sheet", d: "M3 1v8l4-4z" },
  { label: "Last sheet", d: "M8 1v8M1 1v8l5-4z" },
];

function SheetTabs() {
  return (
    <div className="flex h-[17px] shrink-0 bg-[#dfe3e9] pb-px">
      <div className="flex w-16 items-center justify-around pr-0.5 pl-0.5">
        {NAV.map(({ label, d }) => (
          <button key={label} type="button" aria-label={label}>
            <svg viewBox="0 0 10 10" className="size-2" fill="#3b4048" stroke="#3b4048">
              <path d={d} />
            </svg>
          </button>
        ))}
      </div>
      <div className="flex min-w-0 flex-1 overflow-hidden bg-[#f4f6f9] text-xs leading-none text-[#101418]">
        {SHEETS.map(({ name, width, color }, i) => (
          <button
            key={name}
            type="button"
            className={clsx(
              "h-[15px] shrink-0 pr-1 whitespace-nowrap",
              i === 0
                ? "[clip-path:polygon(0_0,100%_0,calc(100%-12px)_100%,0_100%)]"
                : "-ml-3 [clip-path:polygon(13px_0,100%_0,calc(100%-12px)_100%,1px_100%)]",
              width,
              color,
            )}
          >
            {name}
          </button>
        ))}
        <span className={clsx("-ml-3 h-[15px] flex-1 [clip-path:polygon(13px_0,100%_0,100%_100%,1px_100%)]", RED)} />
      </div>
      <div className="flex w-[131px] shrink-0 items-center">
        <span className="h-4 w-1.5 rounded-xs border border-[#7f858f] bg-white" />
        <button type="button" aria-label="Scroll left" className="ml-[7px]">
          <span className="block border-y-5 border-r-5 border-transparent border-r-[#4a4f58]" />
        </button>
        <span className="ml-[7px] flex size-4 items-center justify-center gap-px rounded-xs border border-[#8c929b] bg-[#eceef2]">
          <span className="h-2 w-px bg-[#7a808a]" />
          <span className="h-2 w-px bg-[#7a808a]" />
          <span className="h-2 w-px bg-[#7a808a]" />
          <span className="h-2 w-px bg-[#7a808a]" />
        </span>
        <button type="button" aria-label="Scroll right" className="mr-6 ml-auto">
          <span className="block border-y-5 border-l-5 border-transparent border-l-[#4a4f58]" />
        </button>
      </div>
    </div>
  );
}

function StatusBar() {
  return (
    <div className="flex h-[22px] shrink-0 items-center bg-linear-to-b from-[#eff1f3] via-[#d5d9de] to-[#b9bec6] text-[11px] text-[#3c4148]">
      <span className="w-12 pl-2">Ready</span>
      <span className="h-full w-px bg-[#aab0b8]" />
      <button type="button" aria-label="Record macro" className="mx-2">
        <svg viewBox="0 0 16 14" className="h-3.5 w-4">
          <path d="M2 2h13v11H2z" fill="#fff" stroke="#5577a8" />
          <path d="M2 2h13v3H2z" fill="#5b8bcc" />
          <path d="M5 7h9M5 9.5h9M8 5v8M11.5 5v8" stroke="#8eabd0" />
          <circle cx="4" cy="4" r="3.5" fill="#c0392b" />
        </svg>
      </button>
      <span className="h-full w-px bg-[#aab0b8]" />
      <span className="ml-auto h-full w-px bg-[#aab0b8]" />
      <button type="button" aria-label="Normal view" className="ml-1 flex h-[18px] w-[19px] items-center justify-center rounded-xs border border-[#c79532] bg-[#fbdc83]">
        <svg viewBox="0 0 13 11" className="h-[11px] w-[13px]" fill="#fff" stroke="#5d6168">
          <path d="M.5.5h12v10H.5zM.5 4h12M.5 7h12M4.5.5v10M8.5.5v10" />
        </svg>
      </button>
      <button type="button" aria-label="Page layout view" className="ml-0.5">
        <svg viewBox="0 0 14 12" className="h-3 w-3.5" fill="#e9ebee" stroke="#5d6168">
          <path d="M.5.5h13v11H.5zM4 2.5h6v7H4zM5.5 4.5h3M5.5 6.5h3" />
        </svg>
      </button>
      <button type="button" aria-label="Page break view" className="ml-1.5">
        <svg viewBox="0 0 14 12" className="h-3 w-3.5" fill="#e9ebee" stroke="#5d6168">
          <path d="M.5.5h13v11H.5zM4.5.5v6h5v-6" />
        </svg>
      </button>
      <span className="ml-2.5">70%</span>
      <button type="button" aria-label="Zoom out" className="ml-3.5 flex size-4 items-center justify-center rounded-full border border-[#7b818a] bg-[#f5f6f8]">
        <span className="h-0.5 w-2 bg-[#555]" />
      </button>
      <label className="relative flex w-[100px] items-center">
        <span className="sr-only">Zoom</span>
        <input
          type="range"
          min={0}
          max={100}
          defaultValue={35}
          className="h-4 w-full appearance-none bg-[linear-gradient(#8b919a,#8b919a)] bg-size-[100%_1px] bg-center bg-no-repeat [&::-webkit-slider-thumb]:h-3 [&::-webkit-slider-thumb]:w-[9px] [&::-webkit-slider-thumb]:appearance-none [&::-webkit-slider-thumb]:rounded-b-full [&::-webkit-slider-thumb]:border [&::-webkit-slider-thumb]:border-[#6d737c] [&::-webkit-slider-thumb]:bg-[#f5f6f8]"
        />
      </label>
      <button type="button" aria-label="Zoom in" className="mr-1 flex size-4 items-center justify-center rounded-full border border-[#7b818a] bg-[#f5f6f8]">
        <svg viewBox="0 0 8 8" className="size-2" stroke="#555" strokeWidth="2">
          <path d="M4 0v8M0 4h8" />
        </svg>
      </button>
    </div>
  );
}

/* ---------- Taskbar ---------- */

const Chrome = () => (
  <svg viewBox="0 0 16 16" className="size-4 shrink-0">
    <path d="M8 8 1.5 4A7.5 7.5 0 0 1 15 5z" fill="#dd4b39" />
    <path d="M8 8 1.5 4A7.5 7.5 0 0 0 7 15.5z" fill="#3aa757" />
    <path d="M8 8l7-3A7.5 7.5 0 0 1 7 15.5z" fill="#fbc116" />
    <circle cx="8" cy="8" r="3.5" fill="#fff" />
    <circle cx="8" cy="8" r="2.7" fill="#4285f4" />
  </svg>
);

const Folder = () => (
  <svg viewBox="0 0 16 16" className="size-4 shrink-0">
    <path d="M2 1h7v14H2z" fill="#e9c14f" />
    <path d="M5 3h8v12H5z" fill="#f7e08a" />
    <path d="m8 9 2-6 5-1-1 6-2-2-3 4z" fill="#3fae3a" />
  </svg>
);

const Word = () => (
  <svg viewBox="0 0 16 16" className="size-4 shrink-0">
    <path d="M1 1h14v14H1z" fill="#eaf2fd" stroke="#7da2d8" />
    <path d="M2 3h11v11H2z" fill="#2c66b8" />
    <path d="m3.5 5.5 1.5 6L7.5 6l2.500 5.5 1.5-6" fill="none" stroke="#fff" strokeWidth="1.5" />
  </svg>
);

const TASKS = [
  { label: "Inbox - dmitry@agc...", Icon: Chrome },
  { label: "New Tab - Google C...", Icon: Chrome },
  { label: "Screens", Icon: Folder },
  { label: "DEMO with formulas", Icon: Folder },
  { label: "Laika uzskaites tabul...", Icon: ExcelDoc },
  { label: "List of Templates", Icon: ExcelDoc },
  { label: "budgeting_template...", Icon: ExcelDoc, active: true },
  { label: "Budgeting template...", Icon: Word },
];

function QuickLaunch() {
  return (
    <div className="ml-3 grid grid-cols-5 content-start gap-x-[7px] gap-y-3.5 pt-1.5">
      <button type="button" aria-label="Show desktop">
        <svg viewBox="0 0 16 16" className="size-4">
          <path d="M.5 2.5h15v11H.5z" fill="#3f74c4" stroke="#9fb9de" />
          <path d="M1 3h14L1 9z" fill="#86aee6" />
          <path d="M2 11h3v2H2z" fill="#fff" />
        </svg>
      </button>
      <button type="button" aria-label="Internet Explorer">
        <svg viewBox="0 0 16 16" className="size-4" fill="none">
          <path d="M3.5 9H13c0-7-9-7-9.5 0 0 6 7 6 9 2.5" stroke="#4aa8e8" strokeWidth="2.5" />
          <path d="M1 14c-2-4 8-14 13-12.5 1 .5 1 2 0 3.5" stroke="#f0c54a" strokeWidth="1.2" />
        </svg>
      </button>
      <button type="button" aria-label="Media Player">
        <svg viewBox="0 0 16 16" className="size-4">
          <path d="M.5.5h15v15H.5z" fill="#4b9fd8" stroke="#a9d2ee" />
          <circle cx="8" cy="8" r="6" fill="#f08a24" />
          <path d="M6 4.5v7L12 8z" fill="#fff" />
        </svg>
      </button>
      <button type="button" aria-label="Chrome"><Chrome /></button>
      <button type="button" aria-label="Switch windows">
        <svg viewBox="0 0 16 16" className="size-4">
          <path d="M.5 2.5h15v11H.5z" fill="#1d3f78" stroke="#9fb9de" />
          <path d="M2 4h6v4H2zM5 6h6v4H5zM8 9h6v3H8z" fill="#e7effb" stroke="#26508f" />
        </svg>
      </button>
      <button type="button" aria-label="uTorrent">
        <svg viewBox="0 0 16 16" className="size-4">
          <path d="M.5.5h15v15H.5z" fill="#1f8f3a" stroke="#9bd8a5" />
          <path d="M5 13V4v5c0 2.500 5 2.500 5 0V4v6l2 1" fill="none" stroke="#fff" strokeWidth="2" />
        </svg>
      </button>
      <button type="button" aria-label="Outlook">
        <svg viewBox="0 0 16 16" className="size-4">
          <path d="M.5.5 13 0l2.500 3v12.500H.5z" fill="#f3b62b" stroke="#fbe2a0" />
          <ellipse cx="8" cy="8" rx="3.5" ry="4.5" fill="none" stroke="#fff" strokeWidth="2" />
        </svg>
      </button>
      <button type="button" aria-label="Skype">
        <svg viewBox="0 0 16 16" className="size-4">
          <circle cx="5" cy="5" r="4.5" fill="#2ea9e8" />
          <circle cx="11" cy="11" r="4.5" fill="#2ea9e8" />
          <circle cx="8" cy="8" r="6.5" fill="#2ea9e8" />
          <path d="M11 5.5C9 3.5 5 4 5.5 6.5S11 8 10.5 10 6 12 5 10" fill="none" stroke="#fff" strokeWidth="1.8" />
        </svg>
      </button>
    </div>
  );
}

function Tray() {
  return (
    <div className="ml-auto flex pr-3.5 text-[11px] leading-[14px] text-white">
      <div className="mr-7 flex w-5 flex-col items-center gap-3 pt-[7px]">
        <span>LV</span>
        <svg viewBox="0 0 16 14" className="h-3.5 w-4" fill="#6a6d72" stroke="#d8dce2">
          <path d="M.5 6.5h15v7H.5z" />
          <path d="M2 8.5h12M2 11.5h12" strokeDasharray="2 1" />
          <path d="M4 6c0-3 4-1 5-3s2-2 4-2" fill="none" />
        </svg>
      </div>
      <button type="button" aria-label="Show hidden icons" className="mr-1.5">
        <svg viewBox="0 0 8 10" className="h-2.5 w-2" fill="none" stroke="#fff" strokeWidth="2">
          <path d="M6 1 2 5l4 4" />
        </svg>
      </button>
      <div className="grid grid-cols-2 content-start gap-x-0.5 gap-y-0.5 pt-1">
        <svg viewBox="0 0 16 16" className="size-4">
          <path d="M1 3c2-3 6-1 8-1 6 0 7 5 6 9s-6 4-8 2C2 13-1 8 1 3z" fill="#e0281e" />
          <path d="M4 8h8" stroke="#fff" strokeWidth="2" />
        </svg>
        <svg viewBox="0 0 16 16" className="size-4">
          <path d="m1 4 4-3 3 3 3-3 4 3-3 3 3 3-4 2-3-2-3 2-4-2 3-3z" fill="#5aaef0" />
          <circle cx="12" cy="12" r="4" fill="#2f9e41" />
          <path d="m10 12 1.5 1.5 2.500-3" fill="none" stroke="#fff" />
        </svg>
        <svg viewBox="0 0 16 16" className="size-4">
          <path d="m1 1 8 6 3 7-6-3z" fill="#c4ccd8" />
          <path d="m7 7 7 4-2 4-5-3z" fill="#5276b4" />
        </svg>
        <svg viewBox="0 0 16 16" className="size-4">
          <path d="M1 2c5 0 5-1 7-1s2 1 7 1c0 7-2 11-7 13C3 13 1 9 1 2z" fill="#e9c136" stroke="#8e7110" />
          <circle cx="8" cy="7" r="3" fill="#fff" stroke="#7a7040" />
        </svg>
      </div>
      <div className="mr-1.5 ml-3 flex flex-col gap-[3px] pt-1">
        <svg viewBox="0 0 16 16" className="size-4">
          <path d="M8.5 2.5h6v12h-6zM10 1h3v1h-3z" fill="#dff5d8" stroke="#fff" />
          <path d="M9.5 7h4v7h-4z" fill="#4cb04a" />
          <path d="M2 1v4M6 1v4M1 5h6v3L5 10v5H3v-5L1 8z" fill="#fff" stroke="#fff" />
        </svg>
        <svg viewBox="0 0 16 16" className="size-4">
          <path d="M5.5 1.5h10v8h-10zM.5 5.5h9v7h-9z" fill="#2b64b0" stroke="#cfe0f4" />
          <circle cx="11.5" cy="11.5" r="4" fill="#3fa0c8" />
          <path d="M3 15h5" stroke="#cfe0f4" />
        </svg>
        <svg viewBox="0 0 16 16" className="size-4">
          <path d="M1 4h3l4-4v13L4 9H1z" fill="#f1f3f6" />
          <circle cx="11" cy="10.5" r="4.5" fill="#d9372b" stroke="#fff" />
          <path d="m8.5 8 5 5" stroke="#fff" strokeWidth="1.5" />
        </svg>
      </div>
      <div className="flex w-[60px] flex-col items-center gap-2">
        <span>13:24</span>
        <span>trešdiena</span>
        <span>01.08.2012</span>
      </div>
    </div>
  );
}

function Taskbar() {
  return (
    <footer className="flex h-[59px] shrink-0 bg-[linear-gradient(#8a8a8a_0,#4f5052_6px,#2e3033_14px,#07090d_15px,#04060a_100%)]">
      <button type="button" aria-label="Start" className="ml-2.5 self-center">
        <svg viewBox="0 0 42 42" className="size-[42px]">
          <circle cx="21" cy="21" r="20" fill="#1d5a88" stroke="#8fb5cc" />
          <path d="M3 18a18 18 0 0 1 36 0c-8 4-28 4-36 0z" fill="#a9bcc8" opacity=".6" />
          <path d="M8 33c7 7 19 7 26 0-6-6-20-6-26 0z" fill="#43c8ee" opacity=".8" />
          <path d="M12 12c3-2 6-2 9 0l-2 8c-3-2-6-2-9 0z" fill="#e8582a" />
          <path d="M22 13c3 2 6 2 9 0l-2 8c-3 2-6 2-9 0z" fill="#7cc242" />
          <path d="M10 22c3-2 6-2 9 0l-2 8c-3-2-6-2-9 0z" fill="#3f8fe0" />
          <path d="M20 23c3 2 6 2 9 0l-2 8c-3 2-6 2-9 0z" fill="#fbc52d" />
        </svg>
      </button>
      <QuickLaunch />
      <div className="ml-6 grid grid-cols-5 content-start gap-x-1 gap-y-1 pt-0.5">
        {TASKS.map(({ label, Icon, active }) => (
          <button
            key={label}
            type="button"
            className={clsx(
              "flex h-[26px] w-[156px] items-center gap-1 rounded-xs border border-[#5c5f63] pl-[7px] text-xs whitespace-nowrap text-white",
              active
                ? "bg-[#08090b]"
                : "bg-[linear-gradient(#6a6c6f_0,#3a3c3f_48%,#0c0e11_52%,#1b1e22_100%)]",
            )}
          >
            <Icon />
            {label}
          </button>
        ))}
      </div>
      <Tray />
    </footer>
  );
}

export default function App() {
  return (
    <div className="h-screen border-2 border-[#66ffff] bg-black p-0.5">
      <div className="flex h-full flex-col overflow-hidden border-2 border-[#22f0f0] font-['Open_Sans',sans-serif]">
        <TitleBar />
        <RibbonTabs />
        <Ribbon />
        <FormulaBar />
        <main className="flex min-h-0 flex-1">
          <Sheet />
          <VerticalScroll />
        </main>
        <SheetTabs />
        <StatusBar />
        <Taskbar />
      </div>
    </div>
  );
}
